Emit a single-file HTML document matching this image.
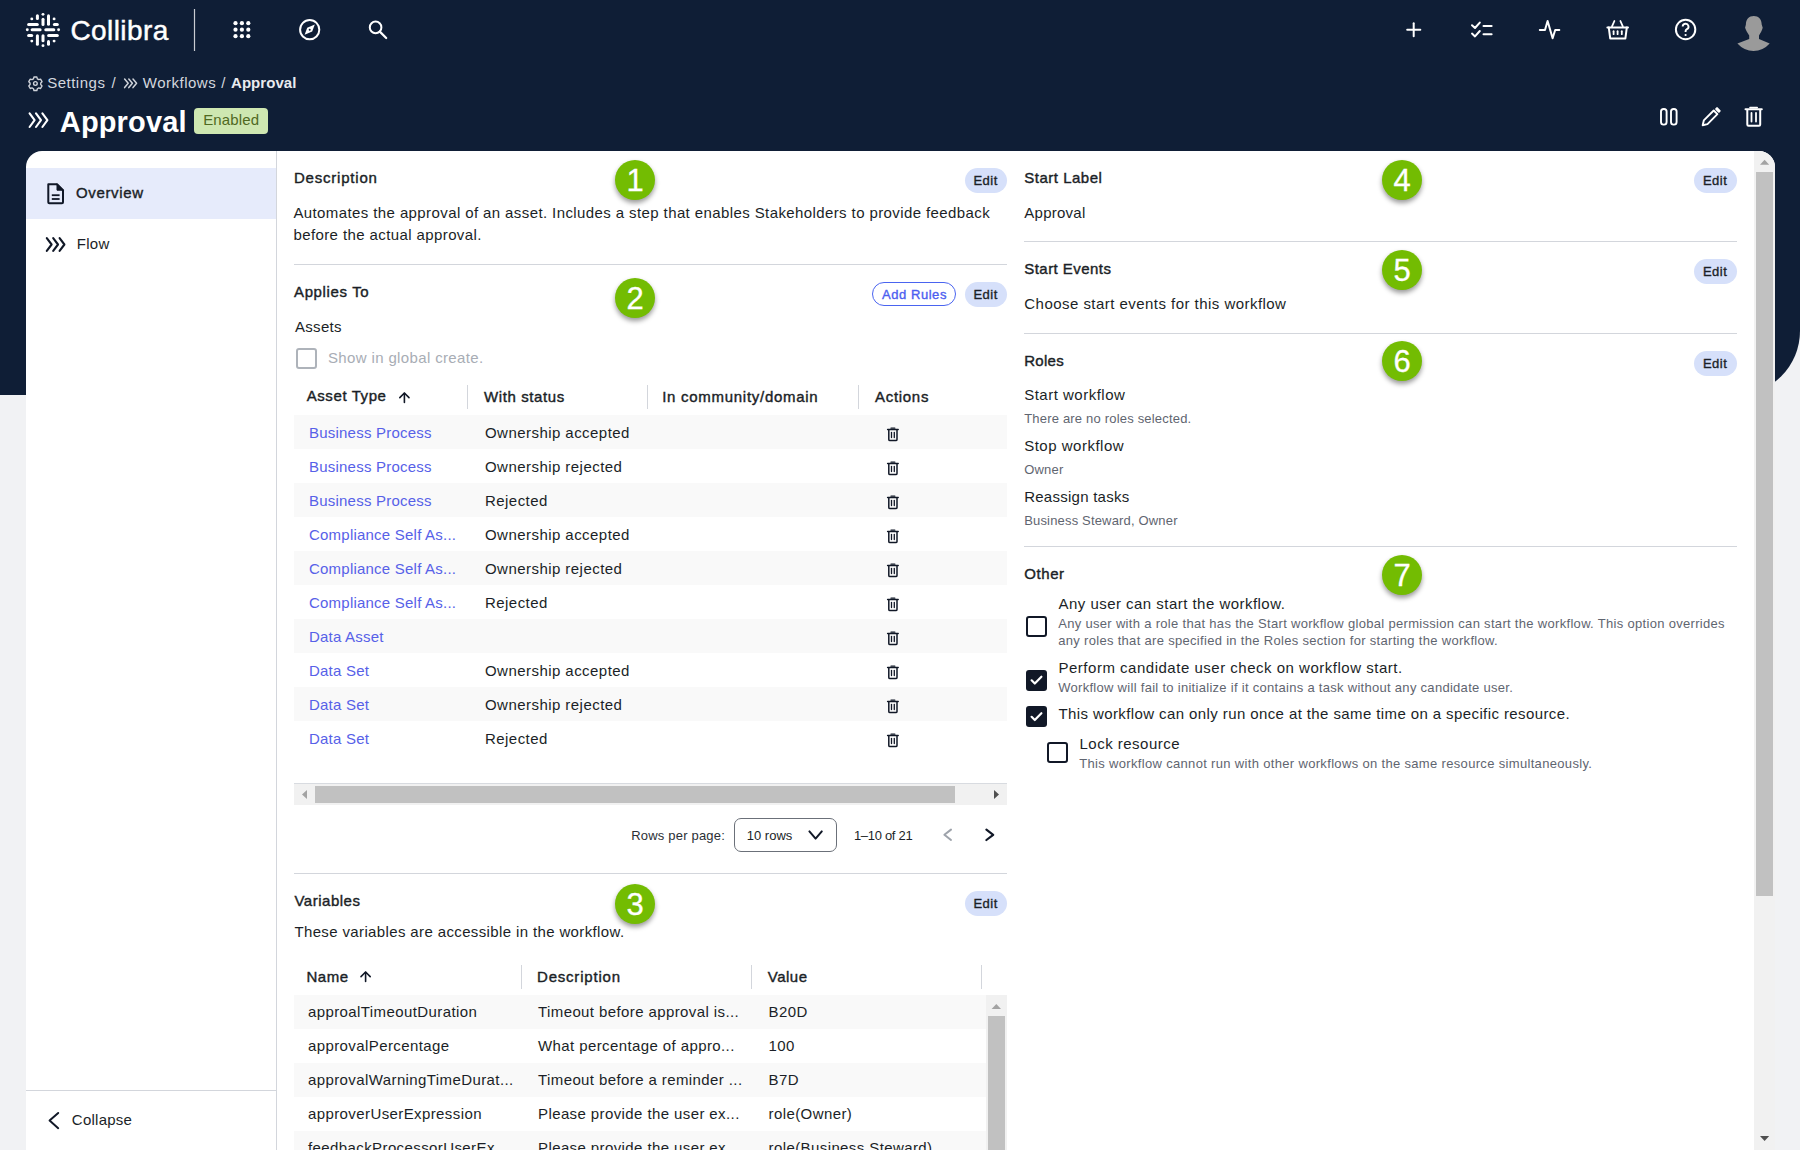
<!DOCTYPE html>
<html><head><meta charset="utf-8"><title>Approval - Collibra</title>
<style>
html,body{margin:0;padding:0}
body{width:1800px;height:1150px;overflow:hidden;position:relative;background:#f1f2f4;font-family:"Liberation Sans",sans-serif}
.t{position:absolute;white-space:nowrap;line-height:1}
.ov{position:absolute;left:0;top:0;overflow:visible}
.bd{position:absolute;width:40px;height:40px;border-radius:50%;background:#73bc02;box-shadow:0 3px 5px rgba(0,0,0,.4);color:#fff;font:400 31px/41px "Liberation Sans",sans-serif;text-align:center;-webkit-text-stroke:0.3px #fff}
</style></head><body>
<div style="position:absolute;left:0px;top:0px;width:1800px;height:395px;background:#0f1e36;border-bottom-right-radius:64px"></div><div style="position:absolute;left:26px;top:151px;width:1749px;height:1050px;background:#fff;border-radius:16px 16px 0 0"></div><div style="position:absolute;left:276px;top:151px;width:1px;height:1000px;background:#d3d6dc"></div><div style="position:absolute;left:26px;top:168px;width:250px;height:51px;background:#e6ebfb"></div><div style="position:absolute;left:26px;top:1090px;width:250px;height:1px;background:#d3d6dc"></div><svg class="ov" width="1800" height="160" viewBox="0 0 1800 160" fill="none" stroke="#fff" stroke-linecap="round" stroke-linejoin="round"><g transform="translate(24,10)" stroke-width="3"><line x1="13.4" y1="5.7" x2="13.4" y2="8.6"/><line x1="19" y1="9.15" x2="19" y2="14.5"/><line x1="24.5" y1="5.7" x2="24.5" y2="14.3"/><line x1="13.4" y1="25.8" x2="13.4" y2="34.3"/><line x1="19" y1="25.7" x2="19" y2="30.8"/><line x1="24.5" y1="31.4" x2="24.5" y2="34.3"/><line x1="4.6" y1="14.4" x2="13.3" y2="14.4"/><line x1="30.4" y1="14.4" x2="33.3" y2="14.4"/><line x1="8.1" y1="19.8" x2="16.1" y2="19.8"/><line x1="21.8" y1="19.8" x2="29.8" y2="19.8"/><line x1="4.6" y1="25.6" x2="7.7" y2="25.6"/><line x1="24.6" y1="25.6" x2="33.3" y2="25.6"/><circle cx="19" cy="4.35" r="1.45" fill="#fff" stroke="none"/><circle cx="19" cy="35.65" r="1.45" fill="#fff" stroke="none"/><circle cx="7.8" cy="8.9" r="1.45" fill="#fff" stroke="none"/><circle cx="30.1" cy="8.9" r="1.45" fill="#fff" stroke="none"/><circle cx="7.8" cy="31.1" r="1.45" fill="#fff" stroke="none"/><circle cx="30.1" cy="31.1" r="1.45" fill="#fff" stroke="none"/><circle cx="3.3" cy="19.8" r="1.45" fill="#fff" stroke="none"/><circle cx="34.6" cy="19.8" r="1.45" fill="#fff" stroke="none"/></g><line x1="194.5" y1="9" x2="194.5" y2="51" stroke="#c9ccd2" stroke-width="1.2" stroke-linecap="butt"/><circle cx="235.5" cy="23.2" r="2.1" fill="#fff" stroke="none"/><circle cx="235.5" cy="29.7" r="2.1" fill="#fff" stroke="none"/><circle cx="235.5" cy="36.2" r="2.1" fill="#fff" stroke="none"/><circle cx="241.9" cy="23.2" r="2.1" fill="#fff" stroke="none"/><circle cx="241.9" cy="29.7" r="2.1" fill="#fff" stroke="none"/><circle cx="241.9" cy="36.2" r="2.1" fill="#fff" stroke="none"/><circle cx="248.3" cy="23.2" r="2.1" fill="#fff" stroke="none"/><circle cx="248.3" cy="29.7" r="2.1" fill="#fff" stroke="none"/><circle cx="248.3" cy="36.2" r="2.1" fill="#fff" stroke="none"/><circle cx="309.7" cy="29.7" r="9.6" stroke-width="2"/><path d="M314.8,24.6 L312.2,31.6 L304.6,34.8 L307.2,27.8 Z" fill="#fff" stroke="none"/><circle cx="309.7" cy="29.7" r="1" fill="#0f1e36" stroke="none"/><circle cx="375.6" cy="27.4" r="5.8" stroke-width="2"/><line x1="379.8" y1="31.6" x2="386.2" y2="38" stroke-width="2.2"/><line x1="1407.2" y1="29.7" x2="1420.3" y2="29.7" stroke-width="2"/><line x1="1413.7" y1="23.2" x2="1413.7" y2="36.3" stroke-width="2"/><polyline points="1472,25.2 1475,28 1479.8,22.6" stroke-width="2"/><polyline points="1472,33.6 1475,36.4 1479.8,31" stroke-width="2"/><line x1="1483.5" y1="26" x2="1491.6" y2="26" stroke-width="2"/><line x1="1483.5" y1="34.2" x2="1491.6" y2="34.2" stroke-width="2"/><polyline points="1539.8,30 1545,30 1547.6,21 1552.6,38.2 1555.2,30 1559.3,30" stroke-width="2"/><line x1="1614.4" y1="21" x2="1612" y2="26.4" stroke-width="1.8"/><line x1="1620.4" y1="21" x2="1622.8" y2="26.4" stroke-width="1.8"/><line x1="1607.4" y1="27.4" x2="1628" y2="27.4" stroke-width="2"/><path d="M1608.8,27.6 L1610.2,38.4 L1625.4,38.4 L1626.8,27.6" stroke-width="2"/><line x1="1613.6" y1="31.2" x2="1613.6" y2="34.2" stroke-width="1.8"/><line x1="1617.6" y1="31.2" x2="1617.6" y2="34.2" stroke-width="1.8"/><line x1="1621.8" y1="31.2" x2="1621.8" y2="34.2" stroke-width="1.8"/><circle cx="1685.6" cy="29.5" r="9.7" stroke-width="2"/><path d="M1682.7,26.6 a2.9,2.9 0 1 1 4.2,2.6 c-0.8,0.4 -1.3,1 -1.3,1.9 v0.9" stroke-width="1.9" stroke-linecap="butt"/><circle cx="1685.6" cy="35" r="1.1" fill="#fff" stroke="none"/><path fill="#9a9a9a" stroke="none" d="M1753.8,15.9 C1758.5,15.9 1761.7,19 1761.7,24.5 L1762.7,27.8 C1762,30.6 1760.6,33 1759,35.5 L1759,39 L1769.7,43.6 A21.5,21.5 0 0 1 1737.4,43.6 L1749.2,39 L1749.2,35.5 C1747.5,33 1746,30.6 1745.1,27.8 L1745.9,24.5 C1745.9,19 1749,15.9 1753.8,15.9 Z"/><g transform="translate(35.4,83.5) scale(0.92)" stroke="#cfd3da" stroke-width="1.5"><circle r="2" /><path d="M-1.6,-7 h3.2 l0.5,1.9 l1.6,0.9 l1.9,-0.6 l1.6,2.8 l-1.4,1.4 v1.8 l1.4,1.4 l-1.6,2.8 l-1.9,-0.6 l-1.6,0.9 l-0.5,1.9 h-3.2 l-0.5,-1.9 l-1.6,-0.9 l-1.9,0.6 l-1.6,-2.8 l1.4,-1.4 v-1.8 l-1.4,-1.4 l1.6,-2.8 l1.9,0.6 l1.6,-0.9 Z"/></g><polyline points="124.6,79 128.2,83.3 124.6,87.6" stroke="#cfd3da" stroke-width="1.5"/><polyline points="128.79999999999998,79 132.39999999999998,83.3 128.79999999999998,87.6" stroke="#cfd3da" stroke-width="1.5"/><polyline points="133.0,79 136.6,83.3 133.0,87.6" stroke="#cfd3da" stroke-width="1.5"/><polyline points="29.6,113.4 34.6,120.2 29.6,127" stroke-width="2.1"/><polyline points="36.0,113.4 41.0,120.2 36.0,127" stroke-width="2.1"/><polyline points="42.400000000000006,113.4 47.400000000000006,120.2 42.400000000000006,127" stroke-width="2.1"/><rect x="1661" y="109" width="5.6" height="15.6" rx="2.6" stroke-width="1.9"/><rect x="1671" y="109" width="5.6" height="15.6" rx="2.6" stroke-width="1.9"/><g transform="translate(1710.6,117.3) rotate(45)"><path d="M-2.6,-7 h5.2 v14 l-2.6,4.2 l-2.6,-4.2 Z" stroke-width="1.9"/><rect x="-2.9" y="-12" width="5.8" height="3.2" rx="1" fill="#fff" stroke="none"/></g><line x1="1745.5" y1="109.2" x2="1761.8" y2="109.2" stroke-width="2"/><line x1="1750" y1="107.6" x2="1757.2" y2="107.6" stroke-width="1.6"/><path d="M1747.3,110 V124.6 Q1747.3,125.8 1748.5,125.8 H1759 Q1760.2,125.8 1760.2,124.6 V110" stroke-width="2"/><line x1="1751.5" y1="113" x2="1751.5" y2="121.6" stroke-width="1.8"/><line x1="1756" y1="113" x2="1756" y2="121.6" stroke-width="1.8"/></svg><div class="t" style="left:70.5px;top:17px;font-size:28px;font-weight:400;color:#fff;letter-spacing:0.4px;-webkit-text-stroke:0.45px #fff">Collibra</div><div class="t" style="left:47.2px;top:75px;font-size:15px;font-weight:400;color:#d3d7de;letter-spacing:0.5px;">Settings</div><div class="t" style="left:111.5px;top:75px;font-size:15px;font-weight:400;color:#d3d7de;letter-spacing:0px;">/</div><div class="t" style="left:142.8px;top:75px;font-size:15px;font-weight:400;color:#d3d7de;letter-spacing:0.5px;">Workflows</div><div class="t" style="left:221.2px;top:75px;font-size:15px;font-weight:400;color:#d3d7de;letter-spacing:0px;">/</div><div class="t" style="left:231px;top:75px;font-size:15px;font-weight:700;color:#e9ebef;letter-spacing:0.05px;">Approval</div><div class="t" style="left:59.8px;top:108px;font-size:29px;font-weight:700;color:#fff;letter-spacing:0.15px;">Approval</div><div style="position:absolute;left:194px;top:108px;width:74px;height:26px;background:#cee7b1;border-radius:4px"></div><div class="t" style="left:203.2px;top:112px;font-size:15px;font-weight:400;color:#50691f;letter-spacing:0.15px;">Enabled</div>
<svg class="ov" width="300" height="1150" viewBox="0 0 300 1150" fill="none" stroke="#111827" stroke-linecap="round" stroke-linejoin="round"><path d="M48.3,184.2 H57 L63,190.2 V202.2 Q63,203.2 62,203.2 H49.3 Q48.3,203.2 48.3,202.2 Z" stroke-width="2"/><path d="M57,184.2 V190.2 H63 Z" fill="#111827" stroke-width="1"/><line x1="51.8" y1="195.2" x2="59.6" y2="195.2" stroke-width="1.8" stroke-linecap="butt"/><line x1="51.8" y1="199" x2="59.6" y2="199" stroke-width="1.8" stroke-linecap="butt"/><polyline points="46.8,238.2 51.6,244.5 46.8,250.8" stroke-width="2.1"/><polyline points="53.199999999999996,238.2 58.0,244.5 53.199999999999996,250.8" stroke-width="2.1"/><polyline points="59.599999999999994,238.2 64.4,244.5 59.599999999999994,250.8" stroke-width="2.1"/><polyline points="58.2,1113 49.6,1120.6 58.2,1128.2" stroke-width="2"/></svg><div class="t" style="left:76px;top:185px;font-size:15px;font-weight:400;color:#1b1f27;letter-spacing:0.64px;-webkit-text-stroke:0.4px #1b1f27;">Overview</div><div class="t" style="left:76.7px;top:236px;font-size:15px;font-weight:400;color:#1b1f27;letter-spacing:0.3px;">Flow</div><div class="t" style="left:71.8px;top:1112px;font-size:15px;font-weight:400;color:#1b1f27;letter-spacing:0.25px;">Collapse</div><div class="t" style="left:293.9px;top:170px;font-size:15px;font-weight:400;color:#1b1f27;letter-spacing:0.8px;-webkit-text-stroke:0.4px #1b1f27;">Description</div><div style="position:absolute;left:965px;top:168px;width:42px;height:25px;background:#d6e0fa;border-radius:13px"></div><div class="t" style="left:973.5px;top:174px;font-size:13px;font-weight:400;color:#1b1f27;letter-spacing:0.45px;-webkit-text-stroke:0.35px #1b1f27;">Edit</div><div class="bd" style="left:615px;top:160px">1</div><div class="t" style="left:293.4px;top:205px;font-size:15px;font-weight:400;color:#1b1f27;letter-spacing:0.4px;">Automates the approval of an asset. Includes a step that enables Stakeholders to provide feedback</div><div class="t" style="left:293.4px;top:227px;font-size:15px;font-weight:400;color:#1b1f27;letter-spacing:0.4px;">before the actual approval.</div><div style="position:absolute;left:294px;top:264px;width:713px;height:1px;background:#d3d6dc"></div><div class="t" style="left:294px;top:284px;font-size:15px;font-weight:400;color:#1b1f27;letter-spacing:0.63px;-webkit-text-stroke:0.4px #1b1f27;">Applies To</div><div class="bd" style="left:615px;top:278px">2</div><div style="position:absolute;left:872px;top:282px;width:82px;height:22px;border:1.5px solid #4a64f0;border-radius:13px"></div><div class="t" style="left:882px;top:288px;font-size:13px;font-weight:400;color:#4c5ef0;letter-spacing:0.55px;-webkit-text-stroke:0.35px #4c5ef0;">Add Rules</div><div style="position:absolute;left:965px;top:282px;width:42px;height:25px;background:#d6e0fa;border-radius:13px"></div><div class="t" style="left:973.5px;top:288px;font-size:13px;font-weight:400;color:#1b1f27;letter-spacing:0.45px;-webkit-text-stroke:0.35px #1b1f27;">Edit</div><div class="t" style="left:295px;top:319px;font-size:15px;font-weight:400;color:#1b1f27;letter-spacing:0.3px;">Assets</div><div style="position:absolute;left:296px;top:348px;width:17px;height:17px;border:2px solid #aeb3ba;border-radius:3px"></div><div class="t" style="left:328px;top:350px;font-size:15px;font-weight:400;color:#a8adb5;letter-spacing:0.36px;">Show in global create.</div><div class="t" style="left:306.7px;top:388px;font-size:15px;font-weight:400;color:#1b1f27;letter-spacing:0.59px;-webkit-text-stroke:0.4px #1b1f27;">Asset Type</div><div class="t" style="left:484px;top:389px;font-size:15px;font-weight:400;color:#1b1f27;letter-spacing:0.6px;-webkit-text-stroke:0.4px #1b1f27;">With status</div><div class="t" style="left:662.2px;top:389px;font-size:15px;font-weight:400;color:#1b1f27;letter-spacing:0.72px;-webkit-text-stroke:0.4px #1b1f27;">In community/domain</div><div class="t" style="left:875px;top:389px;font-size:15px;font-weight:400;color:#1b1f27;letter-spacing:0.7px;-webkit-text-stroke:0.4px #1b1f27;">Actions</div><div style="position:absolute;left:467px;top:385px;width:1px;height:24px;background:#d3d6dc"></div><div style="position:absolute;left:646.5px;top:385px;width:1px;height:24px;background:#d3d6dc"></div><div style="position:absolute;left:858px;top:385px;width:1px;height:24px;background:#d3d6dc"></div><div style="position:absolute;left:294px;top:415px;width:713px;height:34px;background:#f9f9f9"></div><div class="t" style="left:309px;top:425px;font-size:15px;font-weight:400;color:#5761e8;letter-spacing:0.22px;">Business Process</div><div class="t" style="left:485px;top:425px;font-size:15px;font-weight:400;color:#1b1f27;letter-spacing:0.45px;">Ownership accepted</div><div class="t" style="left:309px;top:459px;font-size:15px;font-weight:400;color:#5761e8;letter-spacing:0.22px;">Business Process</div><div class="t" style="left:485px;top:459px;font-size:15px;font-weight:400;color:#1b1f27;letter-spacing:0.45px;">Ownership rejected</div><div style="position:absolute;left:294px;top:483px;width:713px;height:34px;background:#f9f9f9"></div><div class="t" style="left:309px;top:493px;font-size:15px;font-weight:400;color:#5761e8;letter-spacing:0.22px;">Business Process</div><div class="t" style="left:485px;top:493px;font-size:15px;font-weight:400;color:#1b1f27;letter-spacing:0.45px;">Rejected</div><div class="t" style="left:309px;top:527px;font-size:15px;font-weight:400;color:#5761e8;letter-spacing:0.22px;">Compliance Self As...</div><div class="t" style="left:485px;top:527px;font-size:15px;font-weight:400;color:#1b1f27;letter-spacing:0.45px;">Ownership accepted</div><div style="position:absolute;left:294px;top:551px;width:713px;height:34px;background:#f9f9f9"></div><div class="t" style="left:309px;top:561px;font-size:15px;font-weight:400;color:#5761e8;letter-spacing:0.22px;">Compliance Self As...</div><div class="t" style="left:485px;top:561px;font-size:15px;font-weight:400;color:#1b1f27;letter-spacing:0.45px;">Ownership rejected</div><div class="t" style="left:309px;top:595px;font-size:15px;font-weight:400;color:#5761e8;letter-spacing:0.22px;">Compliance Self As...</div><div class="t" style="left:485px;top:595px;font-size:15px;font-weight:400;color:#1b1f27;letter-spacing:0.45px;">Rejected</div><div style="position:absolute;left:294px;top:619px;width:713px;height:34px;background:#f9f9f9"></div><div class="t" style="left:309px;top:629px;font-size:15px;font-weight:400;color:#5761e8;letter-spacing:0.22px;">Data Asset</div><div class="t" style="left:309px;top:663px;font-size:15px;font-weight:400;color:#5761e8;letter-spacing:0.22px;">Data Set</div><div class="t" style="left:485px;top:663px;font-size:15px;font-weight:400;color:#1b1f27;letter-spacing:0.45px;">Ownership accepted</div><div style="position:absolute;left:294px;top:687px;width:713px;height:34px;background:#f9f9f9"></div><div class="t" style="left:309px;top:697px;font-size:15px;font-weight:400;color:#5761e8;letter-spacing:0.22px;">Data Set</div><div class="t" style="left:485px;top:697px;font-size:15px;font-weight:400;color:#1b1f27;letter-spacing:0.45px;">Ownership rejected</div><div class="t" style="left:309px;top:731px;font-size:15px;font-weight:400;color:#5761e8;letter-spacing:0.22px;">Data Set</div><div class="t" style="left:485px;top:731px;font-size:15px;font-weight:400;color:#1b1f27;letter-spacing:0.45px;">Rejected</div><div style="position:absolute;left:294px;top:783px;width:713px;height:1px;background:#d8dbe0"></div><div style="position:absolute;left:294px;top:784px;width:713px;height:21px;background:#f1f1f1"></div><div style="position:absolute;left:315px;top:786px;width:640px;height:17px;background:#c1c1c1"></div><div class="t" style="left:631.2px;top:829px;font-size:13px;font-weight:400;color:#2b2f36;letter-spacing:0.2px;">Rows per page:</div><div style="position:absolute;left:734px;top:818px;width:101px;height:32px;border:1px solid #6b7079;border-radius:7px"></div><div class="t" style="left:746.8px;top:829px;font-size:13px;font-weight:400;color:#1b1f27;letter-spacing:0px;">10 rows</div><div class="t" style="left:853.9px;top:829px;font-size:13px;font-weight:400;color:#1b1f27;letter-spacing:-0.3px;">1–10 of 21</div><div style="position:absolute;left:294px;top:873px;width:713px;height:1px;background:#d3d6dc"></div><div class="t" style="left:294.4px;top:893px;font-size:15px;font-weight:400;color:#1b1f27;letter-spacing:0.52px;-webkit-text-stroke:0.4px #1b1f27;">Variables</div><div style="position:absolute;left:965px;top:891px;width:42px;height:25px;background:#d6e0fa;border-radius:13px"></div><div class="t" style="left:973.5px;top:897px;font-size:13px;font-weight:400;color:#1b1f27;letter-spacing:0.45px;-webkit-text-stroke:0.35px #1b1f27;">Edit</div><div class="bd" style="left:615px;top:884px">3</div><div class="t" style="left:294.4px;top:924px;font-size:15px;font-weight:400;color:#1b1f27;letter-spacing:0.37px;">These variables are accessible in the workflow.</div><div class="t" style="left:306.4px;top:969px;font-size:15px;font-weight:400;color:#1b1f27;letter-spacing:0.53px;-webkit-text-stroke:0.4px #1b1f27;">Name</div><div class="t" style="left:537px;top:969px;font-size:15px;font-weight:400;color:#1b1f27;letter-spacing:0.8px;-webkit-text-stroke:0.4px #1b1f27;">Description</div><div class="t" style="left:767.8px;top:969px;font-size:15px;font-weight:400;color:#1b1f27;letter-spacing:0.5px;-webkit-text-stroke:0.4px #1b1f27;">Value</div><div style="position:absolute;left:520.5px;top:965px;width:1px;height:24px;background:#d3d6dc"></div><div style="position:absolute;left:751px;top:965px;width:1px;height:24px;background:#d3d6dc"></div><div style="position:absolute;left:981px;top:965px;width:1px;height:24px;background:#d3d6dc"></div><div style="position:absolute;left:294px;top:995px;width:692px;height:34px;background:#f9f9f9"></div><div class="t" style="left:308px;top:1004px;font-size:15px;font-weight:400;color:#1b1f27;letter-spacing:0.4px;">approalTimeoutDuration</div><div class="t" style="left:538px;top:1004px;font-size:15px;font-weight:400;color:#1b1f27;letter-spacing:0.4px;">Timeout before approval is...</div><div class="t" style="left:768.6px;top:1004px;font-size:15px;font-weight:400;color:#1b1f27;letter-spacing:0.4px;">B20D</div><div class="t" style="left:308px;top:1038px;font-size:15px;font-weight:400;color:#1b1f27;letter-spacing:0.4px;">approvalPercentage</div><div class="t" style="left:538px;top:1038px;font-size:15px;font-weight:400;color:#1b1f27;letter-spacing:0.4px;">What percentage of appro...</div><div class="t" style="left:768.6px;top:1038px;font-size:15px;font-weight:400;color:#1b1f27;letter-spacing:0.4px;">100</div><div style="position:absolute;left:294px;top:1063px;width:692px;height:34px;background:#f9f9f9"></div><div class="t" style="left:308px;top:1072px;font-size:15px;font-weight:400;color:#1b1f27;letter-spacing:0.4px;">approvalWarningTimeDurat...</div><div class="t" style="left:538px;top:1072px;font-size:15px;font-weight:400;color:#1b1f27;letter-spacing:0.4px;">Timeout before a reminder ...</div><div class="t" style="left:768.6px;top:1072px;font-size:15px;font-weight:400;color:#1b1f27;letter-spacing:0.4px;">B7D</div><div class="t" style="left:308px;top:1106px;font-size:15px;font-weight:400;color:#1b1f27;letter-spacing:0.4px;">approverUserExpression</div><div class="t" style="left:538px;top:1106px;font-size:15px;font-weight:400;color:#1b1f27;letter-spacing:0.4px;">Please provide the user ex...</div><div class="t" style="left:768.6px;top:1106px;font-size:15px;font-weight:400;color:#1b1f27;letter-spacing:0.4px;">role(Owner)</div><div style="position:absolute;left:294px;top:1131px;width:692px;height:34px;background:#f9f9f9"></div><div class="t" style="left:308px;top:1140px;font-size:15px;font-weight:400;color:#1b1f27;letter-spacing:0.4px;">feedbackProcessorUserEx...</div><div class="t" style="left:538px;top:1140px;font-size:15px;font-weight:400;color:#1b1f27;letter-spacing:0.4px;">Please provide the user ex...</div><div class="t" style="left:768.6px;top:1140px;font-size:15px;font-weight:400;color:#1b1f27;letter-spacing:0.4px;">role(Business Steward)</div><div style="position:absolute;left:986px;top:995px;width:21px;height:160px;background:#f1f1f1"></div><div style="position:absolute;left:988px;top:1016px;width:17px;height:140px;background:#c1c1c1"></div><div class="t" style="left:1024.3px;top:170px;font-size:15px;font-weight:400;color:#1b1f27;letter-spacing:0.5px;-webkit-text-stroke:0.4px #1b1f27;">Start Label</div><div style="position:absolute;left:1694px;top:168px;width:43px;height:25px;background:#d6e0fa;border-radius:13px"></div><div class="t" style="left:1703.0px;top:174px;font-size:13px;font-weight:400;color:#1b1f27;letter-spacing:0.45px;-webkit-text-stroke:0.35px #1b1f27;">Edit</div><div class="bd" style="left:1382px;top:160px">4</div><div class="t" style="left:1024.3px;top:205px;font-size:15px;font-weight:400;color:#1b1f27;letter-spacing:0.25px;">Approval</div><div style="position:absolute;left:1024px;top:241px;width:713px;height:1px;background:#d3d6dc"></div><div class="t" style="left:1024.3px;top:261px;font-size:15px;font-weight:400;color:#1b1f27;letter-spacing:0.45px;-webkit-text-stroke:0.4px #1b1f27;">Start Events</div><div style="position:absolute;left:1694px;top:259px;width:43px;height:25px;background:#d6e0fa;border-radius:13px"></div><div class="t" style="left:1703.0px;top:265px;font-size:13px;font-weight:400;color:#1b1f27;letter-spacing:0.45px;-webkit-text-stroke:0.35px #1b1f27;">Edit</div><div class="bd" style="left:1382px;top:250px">5</div><div class="t" style="left:1024.3px;top:296px;font-size:15px;font-weight:400;color:#1b1f27;letter-spacing:0.46px;">Choose start events for this workflow</div><div style="position:absolute;left:1024px;top:333px;width:713px;height:1px;background:#d3d6dc"></div><div class="t" style="left:1024.2px;top:353px;font-size:15px;font-weight:400;color:#1b1f27;letter-spacing:0.3px;-webkit-text-stroke:0.4px #1b1f27;">Roles</div><div style="position:absolute;left:1694px;top:351px;width:43px;height:25px;background:#d6e0fa;border-radius:13px"></div><div class="t" style="left:1703.0px;top:357px;font-size:13px;font-weight:400;color:#1b1f27;letter-spacing:0.45px;-webkit-text-stroke:0.35px #1b1f27;">Edit</div><div class="bd" style="left:1382px;top:341px">6</div><div class="t" style="left:1024.2px;top:387px;font-size:15px;font-weight:400;color:#1b1f27;letter-spacing:0.5px;">Start workflow</div><div class="t" style="left:1024.2px;top:412px;font-size:13px;font-weight:400;color:#5f6570;letter-spacing:0.19px;">There are no roles selected.</div><div class="t" style="left:1024.2px;top:438px;font-size:15px;font-weight:400;color:#1b1f27;letter-spacing:0.5px;">Stop workflow</div><div class="t" style="left:1024.2px;top:463px;font-size:13px;font-weight:400;color:#5f6570;letter-spacing:0.2px;">Owner</div><div class="t" style="left:1024.2px;top:489px;font-size:15px;font-weight:400;color:#1b1f27;letter-spacing:0.25px;">Reassign tasks</div><div class="t" style="left:1024.2px;top:514px;font-size:13px;font-weight:400;color:#5f6570;letter-spacing:0.17px;">Business Steward, Owner</div><div style="position:absolute;left:1024px;top:546px;width:713px;height:1px;background:#d3d6dc"></div><div class="t" style="left:1024.2px;top:566px;font-size:15px;font-weight:400;color:#1b1f27;letter-spacing:0.6px;-webkit-text-stroke:0.4px #1b1f27;">Other</div><div class="bd" style="left:1382px;top:555px">7</div><div style="position:absolute;left:1026px;top:615.5px;width:17px;height:17px;border:2px solid #111827;border-radius:3px"></div><div class="t" style="left:1058.5px;top:596px;font-size:15px;font-weight:400;color:#1b1f27;letter-spacing:0.47px;">Any user can start the workflow.</div><div class="t" style="left:1058.2px;top:617px;font-size:13px;font-weight:400;color:#5f6570;letter-spacing:0.31px;">Any user with a role that has the Start workflow global permission can start the workflow. This option overrides</div><div class="t" style="left:1058.2px;top:634px;font-size:13px;font-weight:400;color:#5f6570;letter-spacing:0.31px;">any roles that are specified in the Roles section for starting the workflow.</div><div style="position:absolute;left:1026px;top:669.5px;width:21px;height:21px;background:#111827;border-radius:3px"></div><div class="t" style="left:1058.5px;top:660px;font-size:15px;font-weight:400;color:#1b1f27;letter-spacing:0.51px;">Perform candidate user check on workflow start.</div><div class="t" style="left:1058.2px;top:681px;font-size:13px;font-weight:400;color:#5f6570;letter-spacing:0.29px;">Workflow will fail to initialize if it contains a task without any candidate user.</div><div style="position:absolute;left:1026px;top:706px;width:21px;height:21px;background:#111827;border-radius:3px"></div><div class="t" style="left:1058.5px;top:706px;font-size:15px;font-weight:400;color:#1b1f27;letter-spacing:0.4px;">This workflow can only run once at the same time on a specific resource.</div><div style="position:absolute;left:1047px;top:741.5px;width:17px;height:17px;border:2px solid #111827;border-radius:3px"></div><div class="t" style="left:1079.5px;top:736px;font-size:15px;font-weight:400;color:#1b1f27;letter-spacing:0.49px;">Lock resource</div><div class="t" style="left:1079.2px;top:757px;font-size:13px;font-weight:400;color:#5f6570;letter-spacing:0.33px;">This workflow cannot run with other workflows on the same resource simultaneously.</div><div style="position:absolute;left:1754px;top:151px;width:21px;height:1000px;background:#f1f1f1;border-top-right-radius:16px"></div><div style="position:absolute;left:1756px;top:172px;width:17px;height:724px;background:#c1c1c1"></div><svg class="ov" width="1800" height="1150" viewBox="0 0 1800 1150" fill="none" stroke="#111827" stroke-linecap="round" stroke-linejoin="round"><line x1="404.4" y1="393.2" x2="404.4" y2="402.4" stroke-width="1.6"/><polyline points="399.8,397.6 404.4,393 409,397.6" stroke-width="1.6"/><line x1="365.6" y1="972.2" x2="365.6" y2="981.4" stroke-width="1.6"/><polyline points="361,976.6 365.6,972 370.2,976.6" stroke-width="1.6"/><g stroke-width="1.5"><line x1="887.6" y1="429.40000000000003" x2="898.2" y2="429.40000000000003"/><line x1="891" y1="428.2" x2="894.8" y2="428.2" stroke-width="1.3"/><path d="M888.8,430.0 V439.40000000000003 Q888.8,440.6 890,440.6 H895.8 Q897,440.6 897,439.40000000000003 V430.0"/><line x1="891.5" y1="432.40000000000003" x2="891.5" y2="437.6" stroke-width="1.3"/><line x1="894.3" y1="432.40000000000003" x2="894.3" y2="437.6" stroke-width="1.3"/></g><g stroke-width="1.5"><line x1="887.6" y1="463.40000000000003" x2="898.2" y2="463.40000000000003"/><line x1="891" y1="462.2" x2="894.8" y2="462.2" stroke-width="1.3"/><path d="M888.8,464.0 V473.40000000000003 Q888.8,474.6 890,474.6 H895.8 Q897,474.6 897,473.40000000000003 V464.0"/><line x1="891.5" y1="466.40000000000003" x2="891.5" y2="471.6" stroke-width="1.3"/><line x1="894.3" y1="466.40000000000003" x2="894.3" y2="471.6" stroke-width="1.3"/></g><g stroke-width="1.5"><line x1="887.6" y1="497.40000000000003" x2="898.2" y2="497.40000000000003"/><line x1="891" y1="496.2" x2="894.8" y2="496.2" stroke-width="1.3"/><path d="M888.8,498.0 V507.40000000000003 Q888.8,508.6 890,508.6 H895.8 Q897,508.6 897,507.40000000000003 V498.0"/><line x1="891.5" y1="500.40000000000003" x2="891.5" y2="505.6" stroke-width="1.3"/><line x1="894.3" y1="500.40000000000003" x2="894.3" y2="505.6" stroke-width="1.3"/></g><g stroke-width="1.5"><line x1="887.6" y1="531.4" x2="898.2" y2="531.4"/><line x1="891" y1="530.1999999999999" x2="894.8" y2="530.1999999999999" stroke-width="1.3"/><path d="M888.8,532.0 V541.4 Q888.8,542.5999999999999 890,542.5999999999999 H895.8 Q897,542.5999999999999 897,541.4 V532.0"/><line x1="891.5" y1="534.4" x2="891.5" y2="539.5999999999999" stroke-width="1.3"/><line x1="894.3" y1="534.4" x2="894.3" y2="539.5999999999999" stroke-width="1.3"/></g><g stroke-width="1.5"><line x1="887.6" y1="565.4" x2="898.2" y2="565.4"/><line x1="891" y1="564.1999999999999" x2="894.8" y2="564.1999999999999" stroke-width="1.3"/><path d="M888.8,566.0 V575.4 Q888.8,576.5999999999999 890,576.5999999999999 H895.8 Q897,576.5999999999999 897,575.4 V566.0"/><line x1="891.5" y1="568.4" x2="891.5" y2="573.5999999999999" stroke-width="1.3"/><line x1="894.3" y1="568.4" x2="894.3" y2="573.5999999999999" stroke-width="1.3"/></g><g stroke-width="1.5"><line x1="887.6" y1="599.4" x2="898.2" y2="599.4"/><line x1="891" y1="598.1999999999999" x2="894.8" y2="598.1999999999999" stroke-width="1.3"/><path d="M888.8,600.0 V609.4 Q888.8,610.5999999999999 890,610.5999999999999 H895.8 Q897,610.5999999999999 897,609.4 V600.0"/><line x1="891.5" y1="602.4" x2="891.5" y2="607.5999999999999" stroke-width="1.3"/><line x1="894.3" y1="602.4" x2="894.3" y2="607.5999999999999" stroke-width="1.3"/></g><g stroke-width="1.5"><line x1="887.6" y1="633.4" x2="898.2" y2="633.4"/><line x1="891" y1="632.1999999999999" x2="894.8" y2="632.1999999999999" stroke-width="1.3"/><path d="M888.8,634.0 V643.4 Q888.8,644.5999999999999 890,644.5999999999999 H895.8 Q897,644.5999999999999 897,643.4 V634.0"/><line x1="891.5" y1="636.4" x2="891.5" y2="641.5999999999999" stroke-width="1.3"/><line x1="894.3" y1="636.4" x2="894.3" y2="641.5999999999999" stroke-width="1.3"/></g><g stroke-width="1.5"><line x1="887.6" y1="667.4" x2="898.2" y2="667.4"/><line x1="891" y1="666.1999999999999" x2="894.8" y2="666.1999999999999" stroke-width="1.3"/><path d="M888.8,668.0 V677.4 Q888.8,678.5999999999999 890,678.5999999999999 H895.8 Q897,678.5999999999999 897,677.4 V668.0"/><line x1="891.5" y1="670.4" x2="891.5" y2="675.5999999999999" stroke-width="1.3"/><line x1="894.3" y1="670.4" x2="894.3" y2="675.5999999999999" stroke-width="1.3"/></g><g stroke-width="1.5"><line x1="887.6" y1="701.4" x2="898.2" y2="701.4"/><line x1="891" y1="700.1999999999999" x2="894.8" y2="700.1999999999999" stroke-width="1.3"/><path d="M888.8,702.0 V711.4 Q888.8,712.5999999999999 890,712.5999999999999 H895.8 Q897,712.5999999999999 897,711.4 V702.0"/><line x1="891.5" y1="704.4" x2="891.5" y2="709.5999999999999" stroke-width="1.3"/><line x1="894.3" y1="704.4" x2="894.3" y2="709.5999999999999" stroke-width="1.3"/></g><g stroke-width="1.5"><line x1="887.6" y1="735.4" x2="898.2" y2="735.4"/><line x1="891" y1="734.1999999999999" x2="894.8" y2="734.1999999999999" stroke-width="1.3"/><path d="M888.8,736.0 V745.4 Q888.8,746.5999999999999 890,746.5999999999999 H895.8 Q897,746.5999999999999 897,745.4 V736.0"/><line x1="891.5" y1="738.4" x2="891.5" y2="743.5999999999999" stroke-width="1.3"/><line x1="894.3" y1="738.4" x2="894.3" y2="743.5999999999999" stroke-width="1.3"/></g><path d="M307,790 L302,794.5 L307,799 Z" fill="#a3a3a3" stroke="none"/><path d="M994,790 L999,794.5 L994,799 Z" fill="#505050" stroke="none"/><polyline points="809.4,831.4 815.6,838.6 821.8,831.4" stroke-width="2"/><polyline points="951,829.6 944.4,834.8 951,840" stroke="#9ea3ab" stroke-width="2"/><polyline points="986.4,829.6 993.2,834.8 986.4,840" stroke-width="2.2"/><path d="M991.6,1009 L996.3,1004 L1001,1009 Z" fill="#a3a3a3" stroke="none"/><polyline points="1031.6,680.3 1034.8,683.5 1041.4,676.7" stroke="#fff" stroke-width="2.2"/><polyline points="1031.6,716.8 1034.8,720 1041.4,713.2" stroke="#fff" stroke-width="2.2"/><path d="M1760,164.8 L1764.6,159.8 L1769.2,164.8 Z" fill="#a3a3a3" stroke="none"/><path d="M1760,1136 L1764.6,1141 L1769.2,1136 Z" fill="#505050" stroke="none"/></svg>
</body></html>
